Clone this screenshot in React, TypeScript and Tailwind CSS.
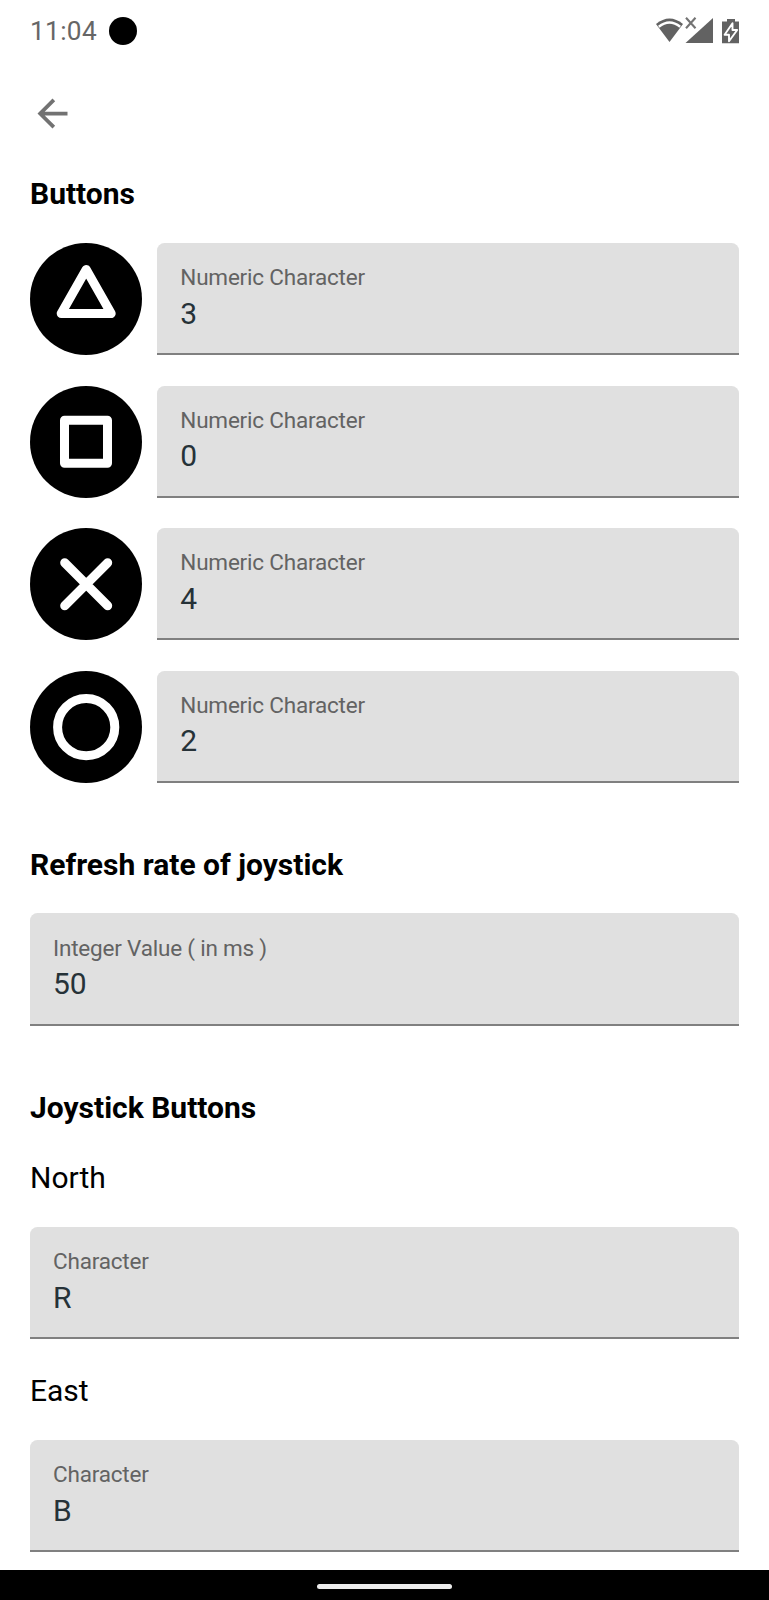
import React from "react";

function StatusBar() {
  return (
    <header className="flex h-[61px] items-center pl-[30px] pr-[29px] text-[#666666]">
      <span className="text-[26.2px] leading-[30px] tracking-[0.35px]">11:04</span>
      <span className="ml-[12.500px] h-[28px] w-[28px] rounded-full bg-black" />
      <svg className="ml-auto" width="84" height="28" viewBox="656 16.5 84 28">
        <path d="M656 23.500Q669.500 12.500 683 23.500L669.500 41.500Z" fill="#626262" />
        <path d="M658.800 26.200Q669.500 17.600 680.200 26.200" fill="none" stroke="#fff" strokeWidth="2.400" />
        <path d="M686 17.200l9.500 10.500M695.500 17.200l-9.500 10.500" stroke="#747474" strokeWidth="2.100" />
        <path d="M713 17.500V42.500H685.500Z" fill="#626262" />
        <path d="M727 18.500h8v2.500h4v21.800h-17V21h5z" fill="#626262" />
        <path d="M732.500 22.800L724.600 34.200h4.400v6.500L737.200 29.500h-4.700z" fill="#626262" stroke="#fff" strokeWidth="1.900" strokeLinejoin="round" />
      </svg>
    </header>
  );
}

function Field({ label, value }: { label: string; value: string }) {
  return (
    <div className="h-[112.300px] flex-1 rounded-t-[7.500px] border-b-2 border-[#808080] bg-[#e0e0e0] pl-[23px] pt-[20.200px]">
      <div className="text-[22.500px] leading-[28px] tracking-[-0.200px] text-[#636363]">{label}</div>
      <div className="mt-[4.500px] text-[30px] leading-[36px] text-[#263238]">{value}</div>
    </div>
  );
}

function Heading({ children }: { children: React.ReactNode }) {
  return <h2 className="text-[30px] font-bold leading-[36px] text-black">{children}</h2>;
}

function Direction({ children }: { children: React.ReactNode }) {
  return <h3 className="text-[30px] leading-[36px] text-black">{children}</h3>;
}

const shapes = {
  triangle: <path d="M56.200 26.500L81.200 70.500H31.200Z" />,
  square: <rect x="34.500" y="34.300" width="43" height="43" />,
  cross: <path d="M34.700 34.700L77.700 77.700M77.700 34.700L34.700 77.700" />,
  circle: <circle cx="56.200" cy="56.200" r="28.600" />,
};

const rows: { shape: keyof typeof shapes; value: string }[] = [
  { shape: "triangle", value: "3" },
  { shape: "square", value: "0" },
  { shape: "cross", value: "4" },
  { shape: "circle", value: "2" },
];

export default function App() {
  return (
    <div className="flex h-[1600px] w-[769px] flex-col overflow-hidden bg-white font-['Roboto',sans-serif]">
      <StatusBar />
      <nav className="h-[115px] pl-[30px] pt-[30px]">
        <button aria-label="Back" className="block">
          <svg width="45" height="45" viewBox="0 0 24 24" fill="#727272">
            <path d="M20 11H7.830l5.590-5.590L12 4l-8 8 8 8 1.410-1.410L7.830 13H20v-2z" />
          </svg>
        </button>
      </nav>
      <main className="flex flex-1 flex-col px-[30px]">
        <Heading>Buttons</Heading>
        <div className="mt-[31.100px] flex flex-col gap-[30.200px]">
          {rows.map((row) => (
            <div key={row.shape} className="flex gap-[15px]">
              <div className="h-[112.300px] w-[112.300px] rounded-full bg-black">
                <svg viewBox="0 0 112.300 112.300" className="h-full w-full" fill="none" stroke="#fff" strokeWidth="9" strokeLinejoin="round" strokeLinecap="round">
                  {shapes[row.shape]}
                </svg>
              </div>
              <Field label="Numeric Character" value={row.value} />
            </div>
          ))}
        </div>
        <div className="mt-[63.700px]">
          <Heading>Refresh rate of joystick</Heading>
        </div>
        <div className="mt-[30.800px] flex">
          <Field label="Integer Value ( in ms )" value="50" />
        </div>
        <div className="mt-[64.200px]">
          <Heading>Joystick Buttons</Heading>
        </div>
        <div className="mt-[34.500px]">
          <Direction>North</Direction>
        </div>
        <div className="mt-[30.800px] flex">
          <Field label="Character" value="R" />
        </div>
        <div className="mt-[33.500px]">
          <Direction>East</Direction>
        </div>
        <div className="mt-[31px] flex">
          <Field label="Character" value="B" />
        </div>
      </main>
      <footer className="flex h-[30px] shrink-0 justify-center bg-black pt-[14px]">
        <span className="h-[5px] w-[135px] rounded-full bg-[#ececec]" />
      </footer>
    </div>
  );
}
